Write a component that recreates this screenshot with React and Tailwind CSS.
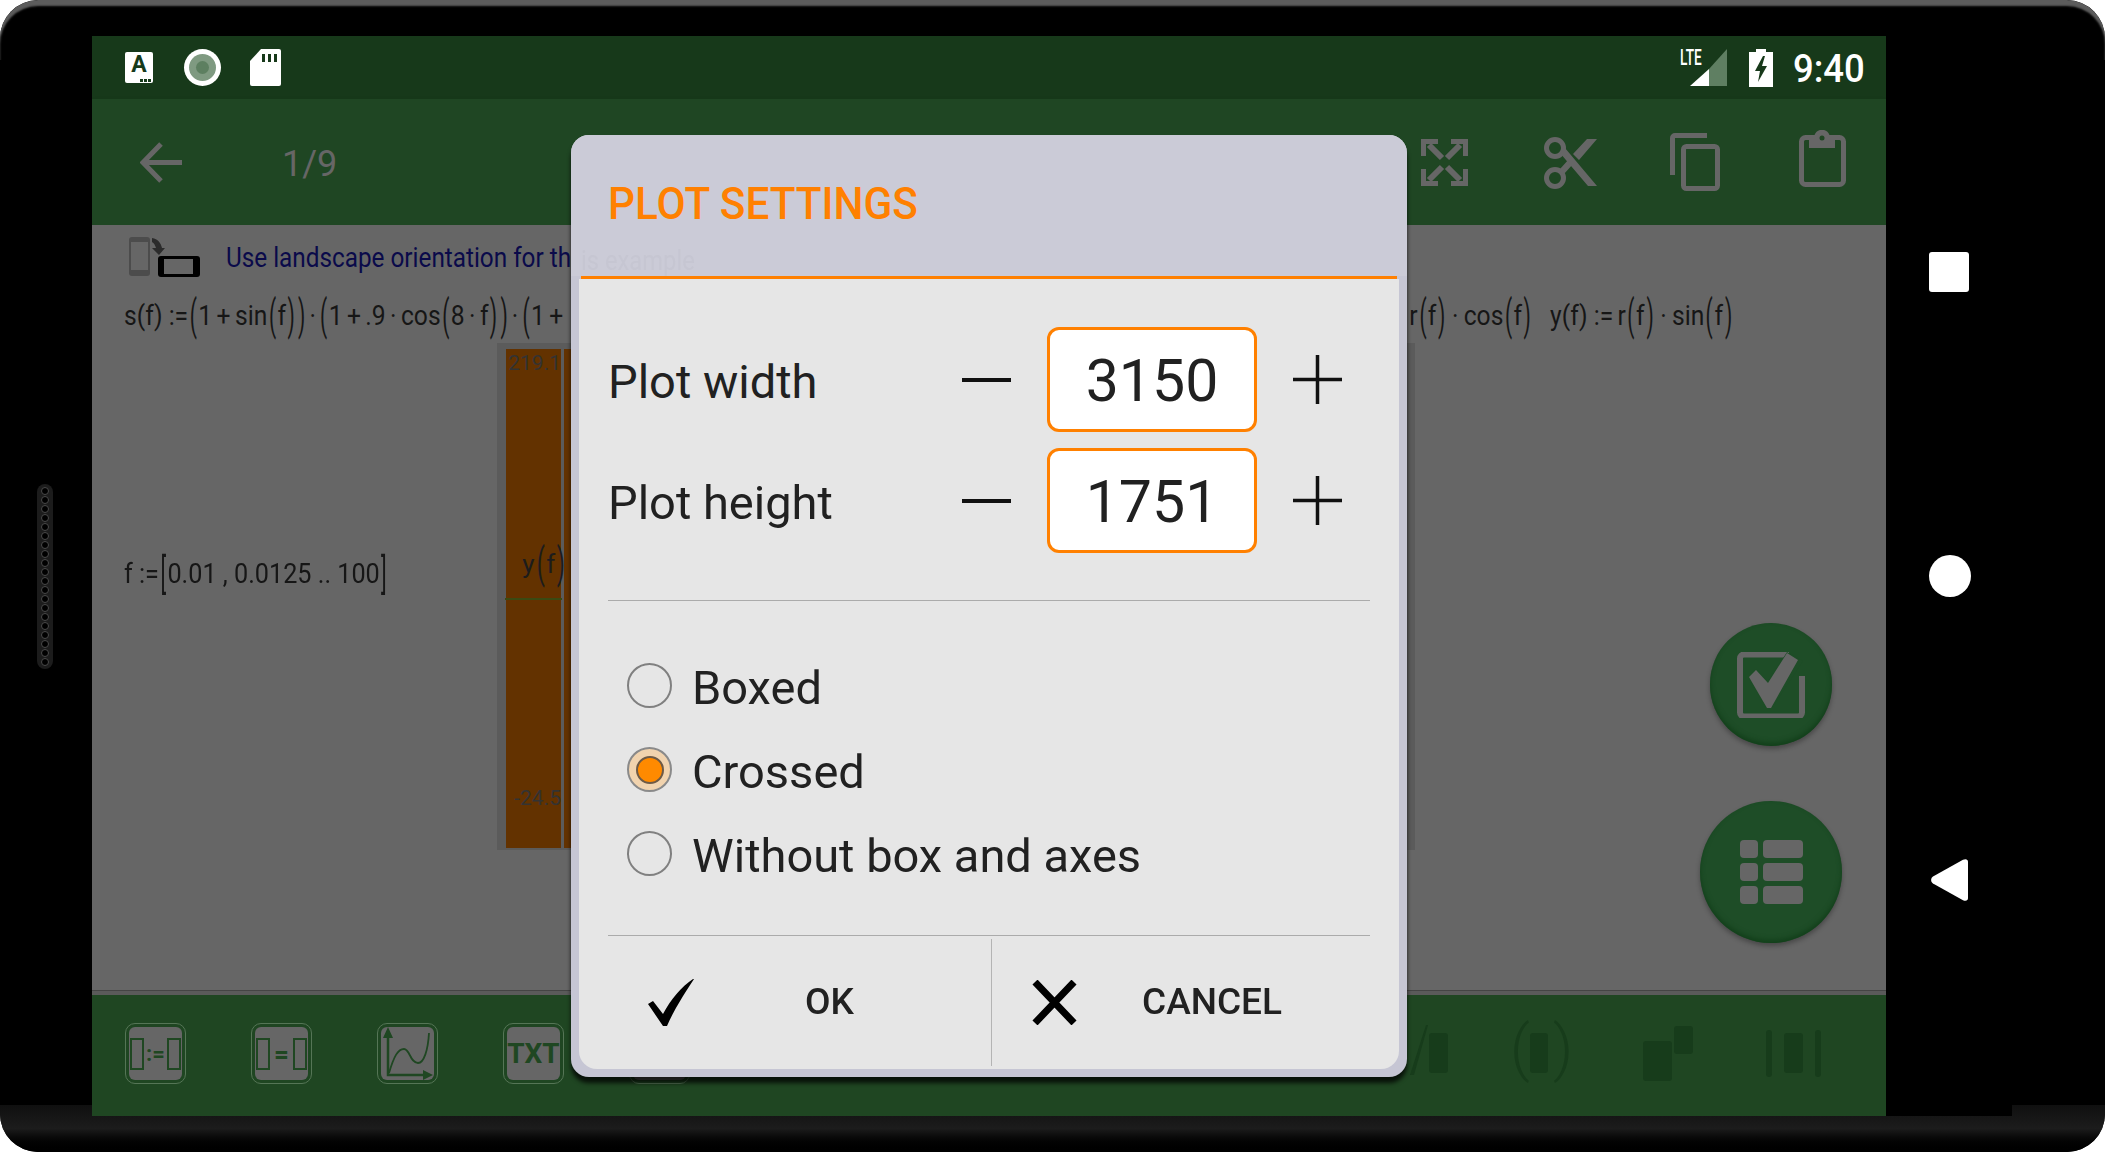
import React from 'react';

const Br = ({ c }) => (
  <span className="inline-block mx-[1px] text-[28px] leading-none font-normal scale-y-[1.55] scale-x-[.85]">{c}</span>
);

// thin gap between the terms of a formula
const S = () => <span className="inline-block w-[5px]" />;

const Dot = () => <span className="mx-[6px]">·</span>;

const Times = () => <span className="mx-[3px]">·</span>;

const Check = () => (
  <svg width="46" height="47" viewBox="0 0 46 47"><path d="M0 25l5-3 10 13C23 20 33 8 45 0h1C36 15 26 31 19 47h-4z" fill="#000" /></svg>
);

const Cross = () => (
  <svg width="45" height="45" viewBox="0 0 45 45"><path d="M3 2l39 41M42 2L3 43" stroke="#000" strokeWidth="7" fill="none" /></svg>
);

const Stepper = ({ label, value }) => (
  <div className="flex items-center h-[105px] pl-[29px]">
    <div className="w-[354px] pt-[5px] text-[47px] text-[#212121]">{label}</div>
    <div className="w-[49px] h-[4px] bg-[#111]" />
    <div className="ml-[36px] w-[210px] h-[105px] pt-[4px] flex items-center justify-center bg-white rounded-[12px] border-[3px] border-[#ff8000] text-[59px] text-[#212121]">{value}</div>
    <svg className="ml-[36px]" width="49" height="49" viewBox="0 0 49 49"><path d="M0 24.5h49M24.5 0v49" stroke="#111" strokeWidth="3.5" /></svg>
  </div>
);

const Radio = ({ label, on }) => (
  <div className="flex items-center h-[45px] pl-[48px]">
    {on ? (
      <div className="w-[45px] h-[45px] rounded-full border-2 border-[#8a8a8a] bg-[#f1d3ae] flex items-center justify-center">
        <div className="w-[28px] h-[28px] rounded-full bg-[#ff8a00] border-2 border-[#6e5a46]" />
      </div>
    ) : (
      <div className="w-[45px] h-[45px] rounded-full border-2 border-[#808080]" />
    )}
    <div className="ml-[20px] pt-[5px] text-[47px] text-[#212121]">{label}</div>
  </div>
);

const ToolKey = ({ children }) => (
  <div className="w-[61px] h-[61px] rounded-[10px] border border-[#557556] p-[3px]">
    <div className="w-full h-full rounded-[6px] bg-[#666] flex items-center justify-center text-[#1f4722]">{children}</div>
  </div>
);

const Slot = () => <div className="w-[14px] h-[32px] border-2 border-[#1f4722]" />;

const Dark = ({ className }) => <div className={`bg-[#173c1b] rounded-[3px] ${className}`} />;

export default function App() {
  return (
    <div className="w-[2105px] h-[1152px] bg-white font-['Roboto',sans-serif]">
      <div className="relative h-full overflow-hidden rounded-[38px] bg-black pt-[36px] flex flex-col">
        <div className="absolute inset-x-0 top-0 h-[60px] rounded-t-[38px] shadow-[inset_0_6px_2px_#5c5c5c]" />
        {/* chin */}
        <div className="absolute inset-x-0 bottom-0 h-[47px] bg-gradient-to-b from-[#101010] via-[#1c1c1c] to-[#000]">
          <div className="ml-[1886px] w-[126px] h-[11px] bg-black" />
        </div>

        <div className="relative flex h-[1080px]">
          {/* left bezel with speaker grille */}
          <div className="w-[92px] flex items-center">
            <div className="ml-[37px] w-[16px] h-[185px] rounded-full bg-[#1c1c1c] flex flex-col items-center justify-center gap-[1px]">
              {Array.from({ length: 20 }).map((_, i) => (
                <div key={i} className="w-[8px] h-[8px] rounded-full border border-[#4a4a4a] bg-black" />
              ))}
            </div>
          </div>

          {/* screen */}
          <div className="relative w-[1794px] flex flex-col">
            {/* status bar */}
            <div className="h-[63px] bg-[#17391a] flex items-center pl-[33px] pr-[22px] text-white">
              <div className="relative w-[28px] h-[31px] rounded-[2px] bg-white flex justify-center text-[#163a1a] text-[23px] font-bold leading-[25px]">
                A
                <div className="absolute right-[2px] bottom-[1px] flex gap-[1px]">
                  <div className="w-[3px] h-[3px] bg-[#163a1a]" />
                  <div className="w-[3px] h-[3px] bg-[#163a1a]" />
                  <div className="w-[3px] h-[3px] bg-[#163a1a]" />
                </div>
              </div>
              <div className="ml-[31px] w-[37px] h-[37px] rounded-full bg-white flex items-center justify-center">
                <div className="w-[27px] h-[27px] rounded-full bg-[#7f9a81] flex items-center justify-center">
                  <div className="w-[13px] h-[13px] rounded-full bg-[#5d7f60]" />
                </div>
              </div>
              <svg className="ml-[29px]" width="31" height="37" viewBox="0 0 31 37">
                <path d="M11 0h18a2 2 0 0 1 2 2v33a2 2 0 0 1-2 2H2a2 2 0 0 1-2-2V12z" fill="#fff" />
                <path d="M12 5h3v8h-3zM18 5h3v8h-3zM24 5h3v8h-3z" fill="#17391a" />
              </svg>
              <div className="flex-1" />
              <div className="relative w-[47px] h-[37px]">
                <svg className="absolute left-0 top-0" width="47" height="37" viewBox="0 0 47 37">
                  <path d="M47 0v37H29V20z" fill="#5f7f62" />
                  <path d="M29 20v17H10z" fill="#fff" />
                </svg>
                <div className="absolute left-0 top-[-1px] text-[22px] leading-[20px] font-medium origin-left scale-x-[.62]">LTE</div>
              </div>
              <svg className="ml-[22px]" width="24" height="38" viewBox="0 0 24 38">
                <path d="M7 0h10v3h7v35H0V3h7z" fill="#fff" />
                <path d="M14 7L6 22h5l-2 11 9-16h-5l3-10z" fill="#17391a" />
              </svg>
              <div className="ml-[20px] w-[71px] pt-[2px] text-[38px] font-medium leading-none whitespace-nowrap origin-left scale-x-[.96]">9:40</div>
            </div>

            {/* toolbar */}
            <div className="relative h-[126px] bg-[#1f4623] flex items-center pl-[48px] pr-[40px] text-[#666] shadow-[0_3px_6px_rgba(0,0,0,.12)]">
              <svg width="42" height="41" viewBox="0 0 42 41"><path d="M42 20.5H4M21 2L3 20.5 21 39" stroke="#666" strokeWidth="5" fill="none" /></svg>
              <div className="ml-[100px] pt-[3px] text-[36px]">1/9</div>
              <div className="flex-1" />
              <svg width="47" height="47" viewBox="0 0 47 47" fill="none" stroke="#666">
                <path d="M2.500 17V2.500H17M44.500 17V2.500H30M2.500 30v14.500H17M44.500 30v14.500H30" strokeWidth="5" />
                <path d="M8 6l13 13M39 6L26 19M8 41l13-13M39 41L26 28" strokeWidth="6" />
              </svg>
              <svg className="ml-[76px]" width="53" height="53" viewBox="0 0 53 53">
                <circle cx="11" cy="12" r="8.500" fill="none" stroke="#666" strokeWidth="5" />
                <circle cx="11" cy="42" r="8.500" fill="none" stroke="#666" strokeWidth="5" />
                <path d="M16 17l5-5 32 38h-9zM16 33l9-10 4 5-9 10zM29 18L43 3h10L35 24z" fill="#666" />
              </svg>
              <svg className="ml-[73px]" width="50" height="58" viewBox="0 0 50 58" fill="none" stroke="#666" strokeWidth="5">
                <path d="M2.500 42V5A2.500 2.500 0 0 1 5 2.500h32" />
                <rect x="13.500" y="13.500" width="34" height="42" rx="3" />
              </svg>
              <svg className="ml-[79px] mt-[-7px]" width="47" height="57" viewBox="0 0 47 57" fill="none">
                <rect x="2.500" y="7.500" width="42" height="47" rx="4" stroke="#666" strokeWidth="5" />
                <path d="M10 5h5.500a8 8 0 0 1 15 0H36v13H10z" fill="#666" />
                <circle cx="23" cy="8" r="2.500" fill="#1f4623" />
              </svg>
            </div>

            {/* worksheet */}
            <div className="relative h-[765px] bg-[#666] text-[#161616] text-[28px]">
              <div className="flex items-center mt-[12px] ml-[37px] h-[40px]">
                <svg width="71" height="40" viewBox="0 0 71 40">
                  <rect x="0" y="0" width="21" height="39" rx="3" fill="#4c4c4c" />
                  <rect x="2" y="5" width="17" height="28" fill="#666" />
                  <path d="M23 1c6 1 9 5 10 10h3l-6 7-7-7h4c-1-3-2-5-4-6z" fill="#2b2b2b" />
                  <rect x="29" y="19" width="42" height="21" rx="3" fill="#000" />
                  <rect x="35" y="22" width="29" height="15" fill="#666" />
                </svg>
                <div className="ml-[26px] pt-[2px] text-[27px] text-[#0a0a4a] whitespace-nowrap origin-left scale-x-[.9]">Use landscape orientation for th</div>
              </div>

              <div className="mt-[18px] ml-[32px] mr-[153px] h-[42px] flex items-center justify-between whitespace-nowrap">
                <div className="origin-left scale-x-[.88]">
                  s(f) :=<Br c="(" />1<S />+<S />sin<Br c="(" />f<Br c=")" /><Br c=")" /><Times /><Br c="(" />1<S />+<S />.9<S />·<S />cos<Br c="(" />8<S />·<S />f<Br c=")" /><Br c=")" /><Times /><Br c="(" />1<S />+
                </div>
                <div className="origin-right scale-x-[.88]">
                  r<Br c="(" />f<Br c=")" /><Dot />cos<Br c="(" />f<Br c=")" /><span className="ml-[20px]">y(f) :=</span><S />r<Br c="(" />f<Br c=")" /><Dot />sin<Br c="(" />f<Br c=")" />
                </div>
              </div>

              <div className="mt-[219px] ml-[32px] h-[36px] flex items-center whitespace-nowrap origin-left scale-x-[.9]">
                f :=<Br c="[" />0.01 , 0.0125 .. 100<Br c="]" />
              </div>

              {/* plot, mostly under the dialog */}
              <div className="absolute left-[405px] top-[118px] w-[918px] h-[507px] bg-[#5b5b5b] flex pl-[9px] pr-[9px] pt-[6px] pb-[2px] gap-[3px]">
                <div className="relative w-[55px] bg-[#633200] text-[#333]">
                  <div className="absolute right-0 top-[-1px] text-[21px] whitespace-nowrap">219.1</div>
                  <div className="absolute right-[-6px] top-[196px] whitespace-nowrap text-[#1c1c1c] text-[26px]">y<Br c="(" />f<Br c=")" /></div>
                  <div className="absolute inset-x-[-1px] top-[249px] h-[2px] bg-[#3b4a12]" />
                  <div className="absolute right-0 top-[434px] text-[21px] whitespace-nowrap">-24.5</div>
                </div>
                <div className="flex-1 bg-[#633200]" />
              </div>

              {/* floating buttons */}
              <div className="absolute left-[1618px] top-[398px] w-[122px] h-[123px] rounded-full bg-[#1e4d27] flex items-center justify-center shadow-[inset_0_-3px_5px_#123f1a,0_3px_5px_rgba(0,0,0,.3)]">
                <svg width="68" height="66" viewBox="0 0 68 66" fill="none">
                  <path d="M52 2.500H7a4 4 0 0 0-4 4v54a4 4 0 0 0 4 4h54a4 4 0 0 0 4-4V24" stroke="#666" strokeWidth="6" />
                  <path d="M11 25l8-8 12 12L50 0l16 9-31 47h-6z" fill="#1e4d27" />
                  <path d="M12 25l7-7 12 13L50 1l11 7-27 48h-4z" fill="#666" />
                </svg>
              </div>
              <div className="absolute left-[1608px] top-[576px] w-[142px] h-[142px] rounded-full bg-[#1e4d27] flex items-center justify-center shadow-[inset_0_-3px_5px_#123f1a,0_3px_5px_rgba(0,0,0,.3)]">
                <div className="grid grid-cols-[18px_40px] gap-x-[5px] gap-y-[5px]">
                  {Array.from({ length: 6 }).map((_, i) => (
                    <div key={i} className="h-[18px] rounded-[4px] bg-[#666]" />
                  ))}
                </div>
              </div>
            </div>

            <div className="h-[5px] bg-[#5a5a5a] border-t border-[#444]" />

            {/* bottom key bar */}
            <div className="h-[121px] bg-[#1f4622] flex items-start pt-[28px] pl-[33px]">
              <div className="flex gap-[65px]">
                <ToolKey><Slot /><span className="mx-[2px] text-[22px] font-bold leading-none">:=</span><Slot /></ToolKey>
                <ToolKey><Slot /><span className="mx-[4px] text-[26px] font-bold leading-none">=</span><Slot /></ToolKey>
                <ToolKey>
                  <svg width="50" height="54" viewBox="0 0 50 54" fill="none">
                    <path d="M5 8v40h38" stroke="#1f4722" strokeWidth="2.500" />
                    <path d="M5 0l5 11H0zM50 48l-10 5V43z" fill="#1f4722" />
                    <path d="M6 46c5-17 9-24 15-24 6 0 6 14 14 14 6 0 10-13 11-30" stroke="#1f4722" strokeWidth="1.800" />
                  </svg>
                </ToolKey>
                <ToolKey><span className="text-[28px] font-bold leading-none">TXT</span></ToolKey>
                <ToolKey />
              </div>
              <div className="ml-[718px] h-[60px] flex items-start">
                <svg className="mt-[2px]" width="22" height="50" viewBox="0 0 22 50"><path d="M20 0L6 50H2L18 0z" fill="#173c1b" /></svg>
                <Dark className="mt-[10px] ml-[-1px] w-[19px] h-[40px]" />
                <div className="mt-[-5px] ml-[62px] w-[20px] h-[60px] text-[62px] font-light leading-[60px] text-[#173c1b]">(</div>
                <Dark className="mt-[10px] w-[18px] h-[40px]" />
                <div className="mt-[-5px] ml-[5px] w-[20px] h-[60px] text-[62px] font-light leading-[60px] text-[#173c1b]">)</div>
                <Dark className="mt-[18px] ml-[70px] w-[29px] h-[40px]" />
                <Dark className="mt-[3px] ml-[2px] w-[19px] h-[28px]" />
                <Dark className="mt-[7px] ml-[73px] w-[6px] h-[47px]" />
                <Dark className="mt-[10px] ml-[12px] w-[19px] h-[40px]" />
                <Dark className="mt-[7px] ml-[12px] w-[6px] h-[47px]" />
              </div>
            </div>

            {/* dialog */}
            <div className="absolute left-[479px] top-[99px] w-[836px] h-[942px] rounded-[18px] bg-[#c6c6d4] px-[8px] pb-[8px] flex flex-col shadow-[0_6px_4px_rgba(0,0,0,.75)]">
              <div className="relative h-[141px] -mx-[8px] rounded-t-[18px] bg-[#cbcbd7] pl-[37px] pt-[44px] text-[44px] font-medium leading-[50px] text-[#ff8000] whitespace-nowrap">
                <div className="origin-left scale-x-[.96]">PLOT SETTINGS</div>
                <div className="absolute left-[10px] top-[110px] text-[27px] leading-[32px] font-normal text-[#c6c6d2] origin-left scale-x-[.88]">is example</div>
              </div>
              <div className="h-[3px] mx-[2px] bg-[#ff8000]" />
              <div className="flex-1 bg-[#e6e6e6] rounded-b-[18px] flex flex-col">
                <div className="pt-[48px] flex flex-col gap-[16px]">
                  <Stepper label="Plot width" value="3150" />
                  <Stepper label="Plot height" value="1751" />
                </div>
                <div className="mt-[47px] mx-[29px] h-px bg-[#ababab]" />
                <div className="mt-[62px] flex flex-col gap-[39px]">
                  <Radio label="Boxed" />
                  <Radio label="Crossed" on />
                  <Radio label="Without box and axes" />
                </div>
                <div className="mt-[59px] mx-[29px] h-px bg-[#ababab]" />
                <div className="flex flex-1 pt-[3px] pb-[3px] text-[37px] font-medium text-[#212121]">
                  <div className="w-[413px] pl-[69px] flex items-center border-r border-[#b4b4b4]">
                    <Check />
                    <div className="ml-[111px] pb-[2px]">OK</div>
                  </div>
                  <div className="flex-1 pl-[40px] flex items-center">
                    <Cross />
                    <div className="ml-[65px] pb-[2px]">CANCEL</div>
                  </div>
                </div>
              </div>
            </div>
          </div>

          {/* nav bar */}
          <div className="flex-1 flex flex-col items-start pl-[43px]">
            <div className="mt-[216px] w-[40px] h-[40px] rounded-[3px] bg-white" />
            <div className="mt-[263px] w-[42px] h-[42px] rounded-full bg-white" />
            <svg className="mt-[262px] ml-[2px]" width="37" height="42" viewBox="0 0 37 42">
              <path d="M2 17.500L32 .8C35 -.5 37 .5 37 3v36c0 2.500-2 3.500-5 2.200L2 24.500c-2.500-1.500-2.500-5.500 0-7z" fill="#fff" />
            </svg>
          </div>
        </div>
      </div>
    </div>
  );
}
